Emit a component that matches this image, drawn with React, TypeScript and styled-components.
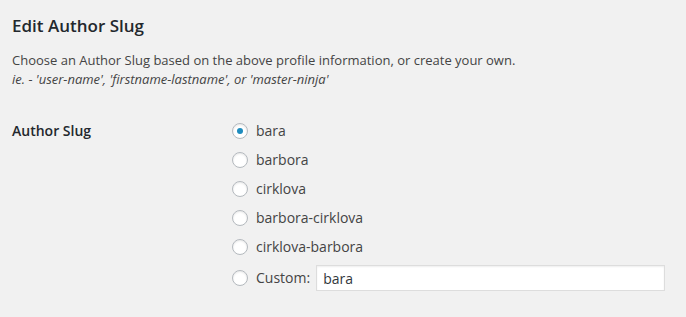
import styled, { createGlobalStyle } from 'styled-components';

const GlobalStyle = createGlobalStyle`
  html, body {
    margin: 0;
    background: #f1f1f1;
  }
  body {
    font-family: 'Open Sans', 'Liberation Sans', sans-serif;
    color: #444;
    font-size: 13px;
  }
`;

const slugOptions = ['bara', 'barbora', 'cirklova', 'barbora-cirklova', 'cirklova-barbora'];

const App = () => {
  return (
    <Page>
      <GlobalStyle />
      <Heading>Edit Author Slug</Heading>
      <Description>
        Choose an Author Slug based on the above profile information, or create your own.
        <br />
        <em>ie. - 'user-name', 'firstname-lastname', or 'master-ninja'</em>
      </Description>
      <FormRow>
        <FieldLabel>Author Slug</FieldLabel>
        <Options>
          {slugOptions.map((slug, i) => (
            <Option key={slug}>
              <Radio checked={i === 0} />
              <OptionText>{slug}</OptionText>
            </Option>
          ))}
          <Option>
            <Radio checked={false} />
            <OptionText>Custom:</OptionText>
            <CustomInput defaultValue="bara" />
          </Option>
        </Options>
      </FormRow>
    </Page>
  );
};

const Page = styled.div`
  padding: 16px 21px 20px 12px;
`;

const Heading = styled.h2`
  margin: 0;
  font-size: 17px;
  font-weight: 600;
  line-height: 20px;
  color: #23282d;
`;

const Description = styled.p`
  margin: 15px 0 0;
  font-size: 13px;
  line-height: 19px;
  color: #444;

  em {
    font-style: italic;
  }
`;

const FormRow = styled.div`
  display: flex;
  margin-top: 31px;
`;

const FieldLabel = styled.div`
  width: 220px;
  flex-shrink: 0;
  font-size: 14px;
  font-weight: 600;
  line-height: 22px;
  color: #23282d;
`;

const Options = styled.div`
  flex: 1;
  display: flex;
  flex-direction: column;
  gap: 7px;
`;

const Option = styled.label`
  display: flex;
  align-items: center;
  min-height: 22px;
  font-size: 14px;
`;

const Radio = styled.span<{ checked: boolean }>`
  position: relative;
  width: 16px;
  height: 16px;
  box-sizing: border-box;
  border-radius: 50%;
  border: 1px solid #b4b9be;
  background: #fff;
  box-shadow: inset 0 1px 2px rgba(0, 0, 0, 0.1);
  flex-shrink: 0;
  margin: 0 8px 0 0;

  &::after {
    content: '';
    display: ${({ checked }) => (checked ? 'block' : 'none')};
    position: absolute;
    left: 4px;
    top: 4px;
    width: 6px;
    height: 6px;
    border-radius: 50%;
    background: #1e8cbe;
  }
`;

const OptionText = styled.span`
  line-height: 22px;
  color: #444;
`;

const CustomInput = styled.input`
  flex: 1;
  margin-left: 6px;
  height: 26px;
  box-sizing: border-box;
  border: 1px solid #ddd;
  box-shadow: inset 0 1px 2px rgba(0, 0, 0, 0.07);
  background: #fff;
  padding: 2px 6px;
  font-family: 'Open Sans', 'Liberation Sans', sans-serif;
  font-size: 14px;
  color: #32373c;
  outline: none;
`;

export default App;
